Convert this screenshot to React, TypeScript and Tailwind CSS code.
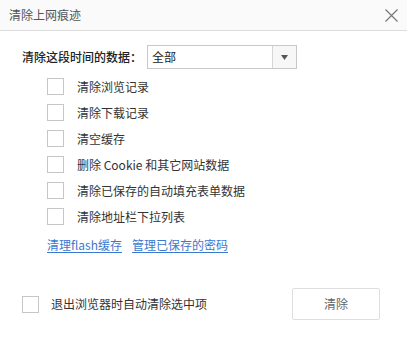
import React from 'react';

const font = { fontFamily: '"Noto Sans CJK SC", "Noto Sans", sans-serif' };

const items = [
  '清除浏览记录',
  '清除下载记录',
  '清空缓存',
  '删除 Cookie 和其它网站数据',
  '清除已保存的自动填充表单数据',
  '清除地址栏下拉列表',
];

const Box = () => (
  <span className="block w-[17px] h-[17px] border border-[#c6c6c6] bg-white shrink-0"></span>
);

export default function App() {
  return (
    <div className="w-[407px] h-[338px] bg-white text-[12px] text-[#333] overflow-hidden" style={font}>
      <div className="h-[31px] bg-[#fafafa] border-b border-[#dcdcdc] flex items-center justify-between pl-[9px] pr-[8px]">
        <span className="text-[12px] text-[#555]">清除上网痕迹</span>
        <svg width="13" height="13" viewBox="0 0 13 13" className="mr-[1px]">
          <path d="M0.5 0.5L12.5 12.5M12.5 0.5L0.5 12.5" stroke="#777" strokeWidth="1.2" />
        </svg>
      </div>

      <div className="mt-[14px] flex items-center pl-[22px]">
        <span className="w-[125px] text-[#222] font-medium">清除这段时间的数据：</span>
        <div className="w-[150px] h-[24px] border border-[#c8c8c8] flex items-stretch">
          <span className="flex-1 flex items-center pl-[4px] text-[#222]">全部</span>
          <span className="w-[24px] border-l border-[#d6d6d6] bg-[#f7f7f7] flex items-center justify-center">
            <svg width="7" height="5" viewBox="0 0 7 5">
              <path d="M0 0H7L3.5 5Z" fill="#555" />
            </svg>
          </span>
        </div>
      </div>

      <div className="mt-[9px] pl-[47px] flex flex-col gap-[9px]">
        {items.map((t) => (
          <div key={t} className="h-[17px] flex items-center gap-[13px]">
            <Box />
            <span>{t}</span>
          </div>
        ))}
      </div>

      <div className="mt-[11px] h-[17px] pl-[47px] flex items-center gap-[10px] text-[#3b78d0]">
        <span className="underline underline-offset-2">清理flash缓存</span>
        <span className="underline underline-offset-2">管理已保存的密码</span>
      </div>

      <div className="mt-[35px] flex items-center pl-[22px] pr-[27px]">
        <Box />
        <span className="ml-[12px]">退出浏览器时自动清除选中项</span>
        <button className="ml-auto w-[88px] h-[32px] border border-[#dedede] rounded-[2px] bg-white text-[#666] text-[12px]" style={font}>
          清除
        </button>
      </div>
    </div>
  );
}
